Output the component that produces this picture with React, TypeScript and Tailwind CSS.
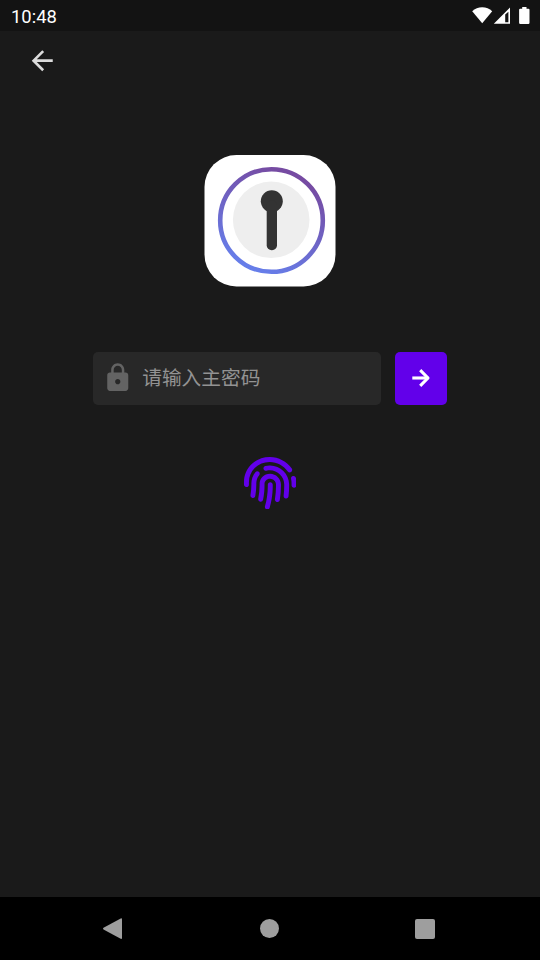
import { FaFingerprint } from 'react-icons/fa'

function StatusBar() {
  return (
    <header className="flex h-[31px] shrink-0 items-center justify-between bg-[#131313] pr-[10px] pl-[11px] text-white">
      <span
        className="pt-[3px] text-[18.4px] leading-none"
        style={{ fontFamily: 'Roboto, sans-serif' }}
      >
        10:48
      </span>
      <svg className="h-[31px] w-[60px]" viewBox="0 0 60 31" fill="currentColor">
        {/* wifi */}
        <path d="M12.200 23.300 2.200 11.200C4.900 8.600 8.400 7.200 12.200 7.200s7.300 1.400 10 4Z" />
        {/* signal */}
        <path fillRule="evenodd" d="M23.800 23.700 40 7.500v16.200ZM35.200 14.600v7.600h3.200V11.700Z" />
        {/* battery */}
        <path d="M52.200 7h4.300v1.700h2a1 1 0 0 1 1 1v13a1.200 1.200 0 0 1-1.200 1.200h-8a1.200 1.200 0 0 1-1.200-1.200v-13a1 1 0 0 1 1-1h2.100Z" />
      </svg>
    </header>
  )
}

function Logo() {
  return (
    <svg className="size-[132px]" viewBox="0 0 132 132">
      <defs>
        <linearGradient id="ring" x1="0.250" y1="0.950" x2="0.650" y2="0.050">
          <stop offset="0" stopColor="#667eea" />
          <stop offset="1" stopColor="#764ba2" />
        </linearGradient>
      </defs>
      <rect x="0.500" y="0" width="131" height="131.500" rx="32" fill="#fff" />
      <circle cx="67.500" cy="65.500" r="51.300" fill="none" stroke="url(#ring)" strokeWidth="4.600" />
      <circle cx="67.200" cy="64.800" r="38.300" fill="#eee" />
      <circle cx="67.800" cy="46.300" r="11" fill="#333" />
      <rect x="62.700" y="45.500" width="10.300" height="49.800" rx="5" fill="#333" />
    </svg>
  )
}

function UnlockForm() {
  return (
    <form className="flex gap-[13.500px]" onSubmit={(e) => e.preventDefault()}>
      <label className="flex h-[52.500px] w-[288.500px] items-center rounded-[5px] bg-[#282828] pl-[9px]">
        <svg className="mb-px size-[31.500px] shrink-0" viewBox="0 0 24 24" fill="#636363">
          <path d="M18 8h-1V6c0-2.760-2.240-5-5-5S7 3.240 7 6v2H6c-1.100 0-2 .9-2 2v10c0 1.100.9 2 2 2h12c1.100 0 2-.9 2-2V10c0-1.100-.9-2-2-2Zm-6 9c-1.100 0-2-.9-2-2s.9-2 2-2 2 .9 2 2-.9 2-2 2Zm3.100-9H8.900V6c0-1.710 1.390-3.100 3.100-3.100s3.100 1.390 3.100 3.100v2Z" />
        </svg>
        <input
          type="password"
          placeholder="请输入主密码"
          className="ml-[9px] w-[220px] bg-transparent pt-px text-[19.700px] text-white outline-none placeholder:text-[#939393]"
          style={{ fontFamily: 'Roboto, "Noto Sans CJK SC", sans-serif' }}
        />
      </label>
      <button
        type="submit"
        aria-label="解锁"
        className="flex h-[52.500px] w-[52.500px] items-center justify-center rounded-[5px] bg-[#6200ea]"
      >
        <svg className="size-6" viewBox="0 0 24 24" fill="none" stroke="#fff" strokeWidth="3.100">
          <path d="M3.300 12h16" />
          <path d="m11.200 4.200 7.800 7.800-7.800 7.800" strokeLinejoin="round" />
        </svg>
      </button>
    </form>
  )
}

function NavBar() {
  return (
    <nav className="flex h-[63px] shrink-0 items-center justify-between bg-black pr-[105px] pl-[102px]">
      <svg className="h-[22px] w-[21px]" viewBox="0 0 21 22" fill="#9e9e9e">
        <path d="M1.500 9.800 18.700 0.500Q20 0 20 1.300v18.700Q20 21.300 18.700 20.800L1.500 11.500Q0.400 10.650 1.500 9.800Z" />
      </svg>
      <span className="size-[19px] rounded-full bg-[#9e9e9e]" />
      <span className="size-5 rounded-[2px] bg-[#9e9e9e]" />
    </nav>
  )
}

export default function App() {
  return (
    <div className="flex h-[960px] w-[540px] flex-col overflow-hidden bg-[#1a1a1a]">
      <StatusBar />
      <div className="flex h-[59px] items-center pl-[26px]">
        <button aria-label="返回">
          <svg className="size-8" viewBox="0 0 32 32" fill="#dcdcdc">
            <path
              transform="translate(0.500 -0.100) scale(1.3125)"
              d="M20 11H7.830l5.590-5.590L12 4l-8 8 8 8 1.410-1.410L7.830 13H20v-2Z"
            />
          </svg>
        </button>
      </div>
      <main className="flex flex-1 flex-col items-center pt-[65px]">
        <Logo />
        <div className="mt-[65px]">
          <UnlockForm />
        </div>
        <button className="mt-[52px]" aria-label="指纹解锁">
          <FaFingerprint className="size-[52.500px] text-[#6200ea]" />
        </button>
      </main>
      <NavBar />
    </div>
  )
}
